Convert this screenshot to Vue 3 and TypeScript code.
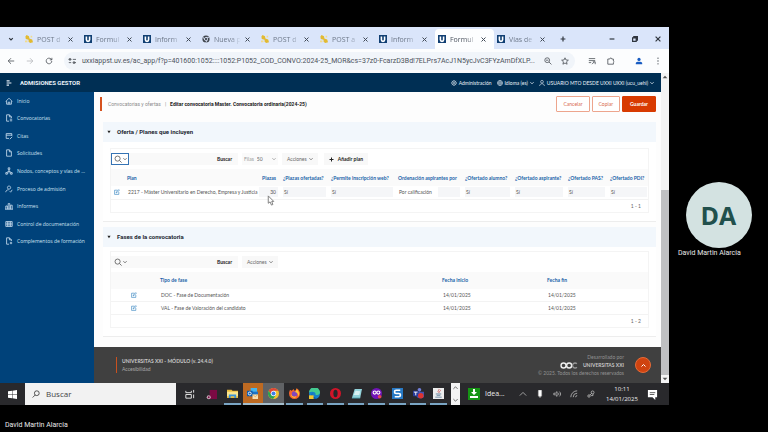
<script setup lang="ts">
import { ref } from 'vue'

interface Tab { icon: 'php' | 'u' | 'chrome'; label: string; active?: boolean }
const tabs: Tab[] = [
  { icon: 'php', label: 'POST d' },
  { icon: 'u', label: 'Formul' },
  { icon: 'u', label: 'Inform' },
  { icon: 'chrome', label: 'Nueva p' },
  { icon: 'php', label: 'POST d' },
  { icon: 'php', label: 'POST a' },
  { icon: 'u', label: 'Inform' },
  { icon: 'u', label: 'Formul', active: true },
  { icon: 'u', label: 'Vías de' },
]

const url = ref('uxxiappst.uv.es/ac_app/f?p=401600:1052::::1052:P1052_COD_CONVO:2024-25_MOR&cs=37z0-FcarzD3Bd!7ELPrs7AcJ1N5ycJvC3FYzAmDfXLP...')

const menu: { label: string; paths: string[] }[] = [
  { label: 'Inicio', paths: ['M1 5.5 5 1.5 9 5.5', 'M2 5v4h6V5', 'M4 9V6.5h2V9'] },
  { label: 'Convocatorias', paths: ['M5 9H2V1h3.5L8 3.5V5', 'M5.5 1v2.5H8', 'M6 6.5h3M6 8.5h3'] },
  { label: 'Citas', paths: ['M8.5 5V2h-7v6H5', 'M1.5 4h7', 'M6 9l3-3'] },
  { label: 'Solicitudes', paths: ['M2 1h3.5L8 3.5V9H2z', 'M5.5 1v2.5H8'] },
  { label: 'Nodos, conceptos y vías de ...', paths: ['M4 1h2v2H4z', 'M1 7h2v2H1zM7 7h2v2H7z', 'M5 3v2L2 7M5 5l3 2M5 5v3'] },
  { label: 'Proceso de admisión', paths: ['M5 1.2a2 2 0 1 0 .1 0', 'M1 9c0-2 1.500-3 3.500-3', 'M6 8l1 1 2-3'] },
  { label: 'Informes', paths: ['M1 9V5h2v4M4 9V2h2v7M7 9V4h2v5', 'M0 9h10'] },
  { label: 'Control de documentación', paths: ['M1 2h8v6H1z', 'M3 2v6M5 2v6M7 2v6', 'M1 5h8'] },
  { label: 'Complementos de formación', paths: ['M5 9H2V1h3.5L8 3.500V5', 'M5.5 1v2.500H8', 'M7.500 6v3M6 7.500h3'] },
]

const planFlags = ['Sí', 'Sí']
const offerFlags = ['Sí', 'Sí', 'Sí', 'Sí']
const phases = [
  { type: 'DOC - Fase de Documentación', from: '14/01/2025', to: '14/01/2025' },
  { type: 'VAL - Fase de Valoración del candidato', from: '14/01/2025', to: '14/01/2025' },
]
const rowsPerPage = ref('50')
const planSearch = ref('')
const phaseSearch = ref('')
const taskSearch = ref('')
</script>

<template>
  <div class="call">
    <div class="stage">
      <section class="desktop">
        <header class="tabstrip">
          <button class="plain tab-list" aria-label="Buscar pestañas"><svg class="i6" viewBox="0 0 10 10"><path d="M2 3.500 5 6.500 8 3.500" /></svg></button>
          <div v-for="(tab, i) in tabs" :key="i" class="tab" :class="{ active: tab.active }">
            <svg v-if="tab.icon === 'php'" class="fav" viewBox="0 0 10 10"><path class="f-yel" d="M2 0 5 1.500 5.500 4.500 9 5.500 10 9 6.500 10 4.500 8.500 4.500 6 1 5 .5 2z" /><path class="f-pale" d="M0 7h3v2H0zM7 1h2v2H7z" /></svg>
            <svg v-else-if="tab.icon === 'u'" class="fav" viewBox="0 0 10 10"><rect class="f-navy" width="10" height="10" /><path class="s-white" d="M3 2v4a2 2 0 0 0 4 0V2" /></svg>
            <svg v-else class="fav" viewBox="0 0 10 10"><circle class="f-dark" cx="5" cy="5" r="4.500" /><circle class="ring" cx="5" cy="5" r="2" /><path class="s-thin" d="M5 3h4M3.300 6 1.300 2.600M6.700 6 4.700 9.500" /></svg>
            <span class="tab-label">{{ tab.label }}</span>
            <button class="plain close" aria-label="Cerrar pestaña"><svg class="i5" viewBox="0 0 10 10"><path d="m1 1 8 8M9 1 1 9" /></svg></button>
          </div>
          <button class="plain new-tab" aria-label="Nueva pestaña"><svg class="i6" viewBox="0 0 10 10"><path d="M5 1v8M1 5h8" /></svg></button>
          <div class="win-buttons">
            <button class="plain" aria-label="Minimizar"><svg class="i6" viewBox="0 0 10 10"><path d="M1 5h8" /></svg></button>
            <button class="plain" aria-label="Restaurar"><svg class="i6" viewBox="0 0 10 10"><path d="M1 3h6v6H1zM3 3V1h6v6H7" /></svg></button>
            <button class="plain" aria-label="Cerrar"><svg class="i6" viewBox="0 0 10 10"><path d="m1 1 8 8M9 1 1 9" /></svg></button>
          </div>
        </header>

        <div class="toolbar">
          <button class="plain" aria-label="Atrás"><svg class="i8" viewBox="0 0 10 10"><path d="M9 5H1.500M5 1.500 1.500 5 5 8.500" /></svg></button>
          <button class="plain faded" aria-label="Adelante"><svg class="i8" viewBox="0 0 10 10"><path d="M1 5h7.500M5 1.500 8.500 5 5 8.500" /></svg></button>
          <button class="plain" aria-label="Recargar"><svg class="i8" viewBox="0 0 10 10"><path d="M8.500 5a3.500 3.500 0 1 1-1-2.500L8.500 3.500M8.600 1v2.600H6" /></svg></button>
          <div class="omnibox">
            <svg class="i8" viewBox="0 0 10 10"><path d="M1 3h3M6 3h4M1 7h3M6.500 7H10" /><circle cx="2.500" cy="3" r="1.200" /><circle cx="7.500" cy="7" r="1.200" /></svg>
            <input v-model="url" aria-label="Dirección" />
            <button class="plain" aria-label="Zoom"><svg class="i8" viewBox="0 0 10 10"><circle cx="4" cy="4" r="3" /><path d="m6.300 6.300 3 3M2.500 4h3" /></svg></button>
            <button class="plain" aria-label="Favorito"><svg class="i8" viewBox="0 0 10 10"><path d="m5 1 1.200 2.700 3 .3-2.300 2 .7 3L5 7.500 2.400 9l.7-3L.8 4l3-.3z" /></svg></button>
          </div>
          <div class="tools">
            <button class="plain" aria-label="Lista"><svg class="i8" viewBox="0 0 10 10"><path d="M1 2h8M1 4.500h8M1 7h3M5 9l3-3M6 6h3v3" /></svg></button>
            <button class="plain" aria-label="Extensiones"><svg class="i8" viewBox="0 0 10 10"><path d="M1 2.500h2.500a1.200 1.200 0 0 1 2.400 0H8V5a1.100 1.100 0 0 1 0 2v2H1z" /></svg></button>
            <button class="plain profile" aria-label="Perfil"><svg class="i8" viewBox="0 0 10 10"><circle class="f-blue" cx="5" cy="3" r="2" /><path class="f-blue" d="M1 9V7.500C1 5.500 9 5.500 9 7.500V9z" /></svg></button>
            <button class="plain" aria-label="Menú"><svg class="i8" viewBox="0 0 10 10"><circle class="f-dark" cx="5" cy="1.500" r=".8" /><circle class="f-dark" cx="5" cy="5" r=".8" /><circle class="f-dark" cx="5" cy="8.500" r=".8" /></svg></button>
          </div>
        </div>

        <div class="viewport">
          <div class="app">
            <header class="app-head">
              <button class="plain" aria-label="Menú principal"><svg class="i6" viewBox="0 0 10 10"><path d="M1 1.500h5M1 5h8M1 8.500h4" /></svg></button>
              <strong>ADMISIONES GESTOR</strong>
              <nav class="head-nav">
                <a href="#"><svg class="i6" viewBox="0 0 10 10"><circle cx="5" cy="5" r="3.500" /><circle cx="5" cy="5" r="1.300" /><path d="M5 0v1.500M5 8.500V10M0 5h1.500M8.500 5H10M1.500 1.500l1 1M7.500 7.500l1 1M8.500 1.500l-1 1M1.500 8.500l1-1" /></svg>Administración</a>
                <a href="#"><svg class="i6" viewBox="0 0 10 10"><circle cx="5" cy="5" r="4.200" /><path d="M1 5h8M5 1C2.500 3 2.500 7 5 9M5 1c2.500 2 2.500 6 0 8" /></svg>Idioma (es)<svg class="i4" viewBox="0 0 10 10"><path d="m1 3 4 4 4-4" /></svg></a>
                <a href="#"><svg class="i6" viewBox="0 0 10 10"><circle cx="5" cy="3" r="2.300" /><path d="M1 10c0-5 8-5 8 0" /></svg>USUARIO MTO DESDE UXXI UXXI (ucu_uehi)<svg class="i4" viewBox="0 0 10 10"><path d="m1 3 4 4 4-4" /></svg></a>
              </nav>
            </header>

            <aside class="sidebar">
              <nav>
                <a v-for="item in menu" :key="item.label" href="#">
                  <svg class="i8" viewBox="0 0 10 10"><path v-for="d in item.paths" :key="d" :d="d" /></svg>
                  <span>{{ item.label }}</span>
                </a>
              </nav>
            </aside>

            <main>
              <div class="title-row">
                <div class="crumbs"><a href="#">Convocatorias y ofertas</a><i>|</i><b>Editar convocatoria Master. Convocatoria ordinaria(2024-25)</b></div>
                <div class="actions">
                  <button class="btn">Cancelar</button>
                  <button class="btn">Copiar</button>
                  <button class="btn primary">Guardar</button>
                </div>
              </div>

              <section class="card">
                <h2><svg class="tri" viewBox="0 0 10 10"><path d="M1 2h8L5 8z" /></svg>Oferta / Planes que incluyen</h2>
                <div class="panel">
                  <div class="controls">
                    <div class="search">
                      <button class="col-pick focused" aria-label="Elegir columna"><svg class="i8" viewBox="0 0 10 10"><circle cx="4.500" cy="4.500" r="3.200" /><path d="m7 7 2.500 2.500" /></svg><svg class="i4" viewBox="0 0 10 10"><path d="m1 3 4 4 4-4" /></svg></button>
                      <input v-model="planSearch" aria-label="Buscar planes" />
                      <button class="plain go">Buscar</button>
                    </div>
                    <label class="rows">Filas
                      <select v-model="rowsPerPage"><option>50</option></select>
                      <svg class="i4" viewBox="0 0 10 10"><path d="m1 3 4 4 4-4" /></svg>
                    </label>
                    <button class="soft">Acciones<svg class="i4" viewBox="0 0 10 10"><path d="m1 3 4 4 4-4" /></svg></button>
                    <button class="soft add"><svg class="i5" viewBox="0 0 10 10"><path d="M5 1v8M1 5h8" /></svg>Añadir plan</button>
                  </div>
                  <table class="plans">
                    <colgroup><col class="w-edit" /><col /><col class="w-places" /><col class="w-seats" /><col class="w-web" /><col class="w-web" /><col class="w-offer" /><col class="w-asp" /><col class="w-pas" /><col class="w-pas" /></colgroup>
                    <thead><tr><th></th><th>Plan</th><th class="num">Plazas</th><th>¿Plazas ofertadas?</th><th>¿Permite inscripción web?</th><th>Ordenación aspirantes por</th><th>¿Ofertado alumno?</th><th>¿Ofertado aspirante?</th><th>¿Ofertado PAS?</th><th>¿Ofertado PDI?</th></tr></thead>
                    <tbody>
                      <tr>
                        <td><a href="#" aria-label="Editar plan"><svg class="edit" viewBox="0 0 10 10"><path d="M6 2H1v7h7V5M3.500 6.500 4 5l4-4 1 1-4 4z" /></svg></a></td>
                        <td><span class="val">2217 - Máster Universitario en Derecho, Empresa y Justicia</span></td>
                        <td class="num"><span class="val fill">30</span></td>
                        <td v-for="(v, i) in planFlags" :key="i"><span class="val fill">{{ v }}</span></td>
                        <td><span class="val part">Por calificación</span></td>
                        <td v-for="(v, i) in offerFlags" :key="i"><span class="val fill">{{ v }}</span></td>
                      </tr>
                    </tbody>
                  </table>
                  <div class="pager">1 - 1</div>
                  <svg class="cursor" viewBox="0 0 8 12"><path d="M1 1v8l2-1.500L4.500 11l1.500-.6L4.800 7H7z" /></svg>
                </div>
              </section>

              <section class="card">
                <h2><svg class="tri" viewBox="0 0 10 10"><path d="M1 2h8L5 8z" /></svg>Fases de la convocatoria</h2>
                <div class="panel">
                  <div class="controls">
                    <div class="search">
                      <button class="col-pick" aria-label="Elegir columna"><svg class="i8" viewBox="0 0 10 10"><circle cx="4.500" cy="4.500" r="3.200" /><path d="m7 7 2.500 2.500" /></svg><svg class="i4" viewBox="0 0 10 10"><path d="m1 3 4 4 4-4" /></svg></button>
                      <input v-model="phaseSearch" aria-label="Buscar fases" />
                      <button class="plain go">Buscar</button>
                    </div>
                    <button class="soft">Acciones<svg class="i4" viewBox="0 0 10 10"><path d="m1 3 4 4 4-4" /></svg></button>
                  </div>
                  <table class="phases">
                    <colgroup><col class="w-pick" /><col /><col class="w-date" /><col class="w-date" /></colgroup>
                    <thead><tr><th></th><th>Tipo de fase</th><th>Fecha inicio</th><th>Fecha fin</th></tr></thead>
                    <tbody>
                      <tr v-for="p in phases" :key="p.type">
                        <td><a href="#" aria-label="Editar fase"><svg class="edit" viewBox="0 0 10 10"><path d="M6 2H1v7h7V5M3.500 6.500 4 5l4-4 1 1-4 4z" /></svg></a></td>
                        <td><span class="val">{{ p.type }}</span></td>
                        <td><span class="val">{{ p.from }}</span></td>
                        <td><span class="val">{{ p.to }}</span></td>
                      </tr>
                    </tbody>
                  </table>
                  <div class="pager">1 - 2</div>
                </div>
              </section>
            </main>

            <footer class="app-foot">
              <div class="product"><b>UNIVERSITAS XXI - MÓDULO (v. 24.4.0)</b><a href="#">Accesibilidad</a></div>
              <div class="credit">
                <span>Desarrollado por</span>
                <span class="brand"><svg viewBox="0 0 27 10"><circle cx="5" cy="5" r="3.600" /><circle cx="13" cy="5" r="3.600" /><path class="dim" d="M24 2.500a3.600 3.600 0 1 0 0 5" /></svg><b>UNIVERSITAS XXI</b></span>
                <span>© 2025. Todos los derechos reservados</span>
              </div>
              <button class="to-top" aria-label="Volver arriba"><svg class="i5" viewBox="0 0 10 10"><path d="m1 7 4-4 4 4" /></svg></button>
            </footer>
          </div>
          <div class="scrollbar">
            <svg viewBox="0 0 10 10"><path d="M2 6.500 5 3.500l3 3z" /></svg>
            <span></span>
            <span class="thumb"></span>
            <svg viewBox="0 0 10 10"><path d="M2 3.500 5 6.500l3-3z" /></svg>
          </div>
        </div>

        <footer class="taskbar">
          <button class="plain start" aria-label="Inicio"><svg viewBox="0 0 10 10"><path d="M0 1.400 4.500.8v3.900H0zM5 .7 10 0v4.700H5zM0 5.200h4.500v4L0 8.600zM5 5.200h5V10L5 9.300z" /></svg></button>
          <label class="task-search">
            <svg class="i8" viewBox="0 0 10 10"><circle cx="6" cy="4" r="3" /><path d="M4 6.200.8 9.400" /></svg>
            <input v-model="taskSearch" placeholder="Buscar" />
          </label>
          <div class="pinned">
            <button class="plain" aria-label="Vista de tareas"><svg class="lines" viewBox="0 0 12 12"><path d="M2 2v2h6V2M2 6h6v4H2zM10.500 1v3M10.500 6v4" /></svg></button>
            <button class="plain" aria-label="Capturas"><svg viewBox="0 0 12 12"><path fill="#7c0a43" d="M4 1h8v10H4z" /><circle cx="3" cy="9" r="2.200" fill="#c6a9b7" /><circle cx="3" cy="9" r="1" fill="#7c0a43" /></svg></button>
          </div>
          <div class="running">
            <button class="plain" aria-label="Explorador"><svg viewBox="0 0 12 12"><path fill="#e9b93a" d="M0 2h5l1 1h6v8H0z" /><path fill="#fbe58d" d="M0 4h12v5H0z" /><path fill="#3b93d8" d="M2 7h8v4H8V9H4v2H2z" /></svg></button>
            <button class="plain outlook" aria-label="Outlook"><svg viewBox="0 0 12 12"><path fill="#46b5ee" d="M4 0h7v8H4z" /><path fill="#1e72c4" d="M4 4h8v5H4z" /><path fill="#0b5aad" d="M0 3h6v6H0z" /><circle cx="3" cy="6" r="1.600" fill="none" stroke="#fff" /><path fill="#f8dfb2" d="M6 7h6v5H6z" /><path fill="none" stroke="#d89b45" stroke-width=".7" d="m6 7 3 2.500L12 7" /></svg></button>
            <button class="plain current" aria-label="Chrome"><svg viewBox="0 0 12 12"><circle cx="6" cy="6" r="6" fill="#f1c232" /><path fill="#dd4639" d="M.8 3A6 6 0 0 1 11.200 3H6L3.600 7.400z" /><path fill="#29a252" d="M.8 3a6 6 0 0 0 4.700 9L8.500 7.500H3.600z" /><circle cx="6" cy="6" r="2.900" fill="#fff" /><circle cx="6" cy="6" r="2.200" fill="#3e7eea" /></svg></button>
            <button class="plain" aria-label="Firefox"><svg viewBox="0 0 12 12"><path fill="#f5632c" d="M1 2l2 1 2-2 1 2c3-1 2-2 2-3 3 2 4 4 4 6a6 6 0 0 1-12 0c0-2 1-3 1-4z" /><circle cx="6" cy="6.500" r="3" fill="#8147bd" /><path fill="#ffc536" d="M8 1c3 2 4 6 2 8 0-3-1-4-4-5 2 0 2-2 2-3zM2 6c1 4 4 4 6 3-1 3-6 2-6-3z" /></svg></button>
            <button class="plain" aria-label="Edge"><svg viewBox="0 0 12 12"><circle cx="6" cy="6" r="6" fill="#1680ca" /><path fill="#44ca91" d="M0 5a6 6 0 0 1 12 0c0 3-4 3-5 2 1-3-4-4-7-2z" /><path fill="#0a4b9b" d="M4 5c-2 3 1 6 5 6-5 3-8-3-5-6z" /><path fill="#f1c52f" d="M0 8h5v4H0z" /></svg></button>
            <button class="plain" aria-label="Opera"><svg viewBox="0 0 12 12"><circle cx="6" cy="6" r="6" fill="#d21429" /><ellipse cx="6" cy="6" rx="2.300" ry="4" fill="#27262a" /></svg></button>
            <button class="plain" aria-label="Bloc de notas"><svg viewBox="0 0 12 12"><path fill="#93d3db" d="M4 1h8l-2 10H1z" /><path fill="#d8f1f3" d="m5 3 5 .5-1 4H3z" /><path stroke="#4999a8" d="M1 11h9" /></svg></button>
            <button class="plain" aria-label="UXXI"><svg viewBox="0 0 12 12"><circle cx="6" cy="6" r="6" fill="#7114b7" /><circle cx="4" cy="5" r="1.700" fill="none" stroke="#fff" stroke-width="1.200" /><circle cx="8" cy="5" r="1.700" fill="none" stroke="#fff" stroke-width="1.200" /><circle cx="9.500" cy="9.500" r="2" fill="#e64755" /></svg></button>
            <button class="plain" aria-label="Snagit"><svg viewBox="0 0 12 12"><rect width="12" height="12" fill="#2779c5" /><path fill="none" stroke="#fff" stroke-width="1.800" d="M9 2.500H4.500a1.700 1.700 0 0 0 0 3.500h3a1.700 1.700 0 0 1 0 3.500H3" /></svg></button>
            <button class="plain" aria-label="Teams"><svg viewBox="0 0 12 12"><circle cx="7" cy="2" r="2" fill="#7380dc" /><path fill="#4450b1" d="M4 4h8v5c0 3-8 3-8 0z" /><path fill="#293b9a" d="M0 3h6v6H0z" /><path stroke="#fff" d="M1 4.500h4M3 4.500V8" /><circle cx="8.500" cy="8.500" r="3" fill="#dd3431" /></svg></button>
            <button class="plain" aria-label="Java"><svg viewBox="0 0 12 12"><rect width="12" height="12" fill="#edeeee" /><path fill="none" stroke="#cf6664" d="M6 1c2 1-2 2 0 4M8 2c1 1-2 2-1 3" /><path fill="none" stroke="#6885a0" d="M3 6.500h6M4 8h4M2.500 10h7" /></svg></button>
          </div>
          <div class="spin"><svg viewBox="0 0 10 10"><path d="m2 7 3-3 3 3" /></svg><svg viewBox="0 0 10 10"><path d="m2 3 3 3 3-3" /></svg></div>
          <button class="plain idea"><svg viewBox="0 0 12 12"><rect width="12" height="12" fill="#159514" /><path fill="#fff" d="M5 1h2v3h2L6 7 3 4h2zM2 8h8v2H2z" /></svg>Idea...</button>
          <div class="tray">
            <svg viewBox="0 0 10 10"><path d="m1 7 4-4 4 4" /></svg>
            <svg viewBox="0 0 10 10"><rect class="solid" x="3" y="0" width="4" height="8" rx="1" /><path d="M5 8v2" /></svg>
            <svg viewBox="0 0 10 10"><path d="M1 4h2l2-2v6L3 6H1zM6.500 3.500c1 1 1 2 0 3M8 2c2 2 2 4 0 6" /></svg>
            <svg viewBox="0 0 10 10"><path d="M1 9a8 8 0 0 1 8-8M4 9a5 5 0 0 1 5-5M7 9a2 2 0 0 1 2-2" /></svg>
            <svg viewBox="0 0 10 10"><path d="M3.500 6.500 6 4" /><circle cx="2.500" cy="7.500" r="1.500" /><circle cx="7" cy="3" r="1.800" /><path d="M5 7h2.500V5" /></svg>
          </div>
          <div class="clock"><span>10:11</span><span>14/01/2025</span></div>
          <button class="plain notes" aria-label="Notificaciones"><svg viewBox="0 0 12 12"><path fill="#fff" d="M1 1h10v8H9v3L6 9H1z" /><path stroke="#555" d="M3 4h6M3 6h5" /></svg></button>
        </footer>
      </section>

      <aside class="participant">
        <div class="avatar">DA</div>
        <span>David Martin Alarcia</span>
      </aside>
    </div>
    <div class="speaker">David Martin Alarcia</div>
  </div>
</template>

<style>
body { margin: 0; background: #000; }
</style>

<style scoped>
* { box-sizing: border-box; }
.call { min-height: 100vh; display: flex; flex-direction: column; padding-top: 27px; background: #000; color: #e8e8e8; font-family: "Open Sans", "Noto Sans", sans-serif; }
.stage { flex: 1; display: grid; grid-template-columns: minmax(0, 1fr) 99px; }
.speaker { height: 27px; padding: 15px 5px 0; font-family: Roboto, sans-serif; font-size: 7px; line-height: 10px; }
.desktop { display: flex; flex-direction: column; min-width: 0; }
a { color: inherit; text-decoration: none; }
button, input, select { font: inherit; color: inherit; margin: 0; padding: 0; border: 0; background: none; outline: 0; border-radius: 0; }
button { white-space: nowrap; }
svg { display: block; flex: none; fill: none; stroke: currentColor; stroke-width: 1; }
.plain { display: flex; align-items: center; justify-content: center; }
.i4 { width: 4px; height: 4px; stroke-width: 2; }
.i5 { width: 5px; height: 5px; stroke-width: 2; }
.i6 { width: 6px; height: 6px; stroke-width: 2; }
.i8 { width: 8px; height: 8px; stroke-width: 1; }

.tabstrip { height: 22px; display: flex; align-items: stretch; padding-top: 2px; background: #dae5fa; color: #30363f; font-size: 7px; }
.tab-list { width: 22px; }
.tab { width: 59px; display: flex; align-items: center; gap: 4px; padding: 0 8px 0 3px; color: #6d7889; border-radius: 4px 4px 0 0; }
.tab.active { background: #fdfeff; color: #4b525e; }
.tab-label { flex: 1; min-width: 0; overflow: hidden; white-space: nowrap; mask-image: linear-gradient(90deg, #000 60%, transparent); }
.close { color: #414a57; }
.fav { width: 8px; height: 8px; }
.f-yel { fill: #e2ba31; stroke: none; }
.f-pale { fill: #f2dc8c; stroke: none; }
.f-navy { fill: #103f73; stroke: none; }
.f-dark { fill: #40464e; stroke: none; }
.f-blue { fill: #185cc2; stroke: none; }
.s-white { stroke: #fff; stroke-width: 2; }
.s-thin { stroke: #dae5fa; }
.ring { fill: #40464e; stroke: #dae5fa; }
.new-tab { width: 20px; }
.win-buttons { margin-left: auto; display: grid; grid-template-columns: repeat(3, 23px); }

.toolbar { height: 24px; display: flex; align-items: center; gap: 11px; padding: 0 7px; background: #fcfdfe; color: #4a4f56; font-size: 7px; }
.faded { opacity: .4; }
.omnibox { flex: 1; min-width: 0; height: 18px; display: flex; align-items: center; gap: 9px; padding: 0 6px 0 4px; border-radius: 9px; background: #f1f5fa; }
.omnibox input { flex: 1; min-width: 0; height: 12px; font-family: Roboto, sans-serif; color: #4c525a; }
.omnibox > svg { margin-right: -3px; }
.tools { display: flex; align-items: center; gap: 11px; padding-left: 2px; }
.profile { padding-left: 9px; }

.viewport { flex: 1; display: grid; grid-template-columns: minmax(0, 1fr) 8px; }
.app { display: grid; grid-template: 19px minmax(0, 1fr) 36px / 94px minmax(0, 1fr); font-family: Lato, sans-serif; font-size: 5px; line-height: 8px; color: #333; background: #fdfdfd; }
.app-head { grid-column: 1 / -1; display: flex; align-items: center; gap: 8px; padding: 0 7px 0 6px; background: #002f54; color: #e9f1f8; font-size: 6px; }
.app-head strong { font-family: Roboto, sans-serif; }
.head-nav { margin-left: auto; display: flex; gap: 5px; font-size: 5px; }
.head-nav a { display: flex; align-items: center; gap: 2px; }
.head-nav .i6 { stroke-width: 1; }
.sidebar { grid-row: 2 / 4; background: #00427a; color: #cfe2f2; font-family: "Open Sans", sans-serif; }
.sidebar nav { height: 158px; display: grid; grid-auto-rows: 1fr; }
.sidebar a { display: flex; align-items: center; gap: 4px; padding-left: 5px; white-space: nowrap; }

main { padding: 0 5px 0 9px; }
.title-row { height: 24px; display: flex; justify-content: space-between; align-items: center; margin-left: -3px; }
.crumbs { display: flex; align-items: center; gap: 4px; height: 14px; padding-left: 6px; border-left: 2px solid #d6521e; font-family: Roboto, sans-serif; }
.crumbs a, .crumbs i { color: #8c8c8c; font-style: normal; }
.crumbs b { color: #222; }
.actions { display: flex; gap: 2px; }
.btn { height: 16px; padding: 0 6px; border: 1px solid #eda58d; border-radius: 1px; color: #d8674a; background: #fff; }
.btn.primary { padding: 0 7px; background: #d83b01; border-color: #d83b01; color: #fff; font-weight: 700; }

.card { margin-top: 6px; padding-bottom: 8px; background: #fff; border-bottom: 1px solid #ededed; }
.card + .card { margin-top: 5px; }
h2 { margin: 0; height: 20px; display: flex; align-items: center; gap: 6px; padding-left: 4px; background: #f2f7fc; color: #1d2733; font-family: Roboto, sans-serif; font-size: 6px; line-height: 10px; }
.tri { width: 4px; height: 4px; fill: #222; stroke: none; }
.panel { position: relative; margin: 6px 7px 0; border: 1px solid #f4f4f4; }
.card + .card .panel { margin-top: 4px; }
.controls { height: 20px; display: flex; align-items: center; gap: 4px; }
.search { width: 127px; height: 12px; display: flex; align-items: stretch; background: #f9f9f9; }
.search input { flex: 1; min-width: 0; }
.col-pick { width: 18px; display: flex; align-items: center; justify-content: center; gap: 1px; color: #555; }
.col-pick.focused { border: 1px solid #3573b4; background: #fff; }
.go { padding: 0 6px; font-weight: 700; color: #222; }
.rows { height: 12px; width: 36px; display: flex; align-items: center; gap: 3px; padding: 0 2px; color: #999; background: #fafafa; }
.rows select { width: 14px; appearance: none; color: #666; }
.soft { height: 12px; display: flex; align-items: center; gap: 2px; padding: 0 5px; background: #f8f8f8; color: #666; }
.add { margin-left: 2px; gap: 4px; font-weight: 700; color: #222; }

table { width: 100%; table-layout: fixed; border-collapse: collapse; }
th { height: 17px; padding: 0 0 0 4px; text-align: left; white-space: nowrap; background: #fafafa; color: #1862a8; font-weight: 700; }
td { height: 13px; padding: 0 1px 0 4px; white-space: nowrap; color: #555; border-bottom: 1px solid #f3f3f3; }
th.num { padding: 0 3px 0 0; text-align: right; }
td.num { text-align: right; }
td:first-child { padding: 0; }
td a { display: grid; place-items: center; }
.val { display: block; padding: 0 2px 0 1px; line-height: 10px; }
.fill { background: #f5f6f8; }
.part { background: linear-gradient(90deg, #fff 64%, #f5f6f8 64%); }
.edit { width: 6px; height: 6px; color: #2a7cbc; }
.w-edit { width: 12px; }
.w-places { width: 24px; }
.w-seats { width: 48px; }
.w-offer { width: 50px; }
.w-web { width: 67px; }
.w-asp { width: 53px; }
.w-pas { width: 42px; }
.w-pick { width: 45px; }
.w-date { width: 105px; }
.pager { height: 12px; padding: 2px 7px 0 0; text-align: right; color: #666; }
.cursor { position: absolute; left: 156px; top: 46px; width: 8px; height: 11px; fill: #fff; stroke: #777; }

.app-foot { display: flex; align-items: center; padding: 0 10px 0 22px; background: #404040; color: #aaa; }
.product { display: flex; flex-direction: column; padding-left: 5px; border-left: 1px solid #c9511f; }
.product b { color: #c8c8c8; }
.credit { margin: 0 11px 0 auto; display: flex; flex-direction: column; align-items: flex-end; color: #929292; }
.brand { display: flex; align-items: center; gap: 4px; color: #c4c4c4; }
.brand svg { width: 19px; height: 7px; stroke: #eee; stroke-width: 2; }
.brand .dim { stroke: #999; }
.to-top { width: 16px; height: 16px; display: grid; place-items: center; border: 1px solid #e66b37; border-radius: 50%; background: #cf4310; color: #fff; }

.scrollbar { display: grid; grid-template-rows: 10px 107fr 185fr 8px; background: #f4f4f4; }
.scrollbar svg { width: 8px; height: 8px; fill: #555; stroke: none; }
.thumb { background: #bfc0c2; }

.taskbar { height: 22px; display: flex; align-items: center; background: #29292c; color: #ececec; font-size: 7px; line-height: 10px; }
.taskbar .plain { height: 22px; }
.start { width: 25px; }
.start svg { width: 9px; height: 9px; fill: #fff; stroke: none; }
.task-search { flex: 1; max-width: 151px; height: 22px; display: flex; align-items: center; gap: 6px; padding-left: 7px; background: #f2f2f2; color: #333; font-size: 8px; }
.task-search input { min-width: 0; flex: 1; }
.task-search input::placeholder { color: #444; opacity: 1; }
.pinned { display: grid; grid-template-columns: 22px 22px; margin-left: 2px; }
.pinned svg, .running svg { width: 11px; height: 11px; stroke-width: 1; }
.pinned svg:not(.lines) { stroke: none; }
.running { width: 227px; display: grid; grid-template-columns: repeat(11, 1fr); }
.running svg { stroke: none; }
.running .plain { border-bottom: 2px solid #7aa5c4; background-clip: padding-box; margin: 0 2px; }
.running .outlook, .running .current { margin: 0; border-color: #a4bdcc; }
.running .outlook { background: #bd6a22; }
.running .current { background: #606265; }
.spin { width: 9px; height: 22px; margin-left: 2px; display: flex; flex-direction: column; justify-content: space-between; align-items: center; padding: 1px 0; background: #f4f4f4; color: #333; }
.spin svg { width: 7px; height: 7px; }
.idea { gap: 5px; margin-left: 8px; }
.idea svg { width: 12px; height: 12px; stroke: none; }
.tray { margin-left: auto; display: flex; gap: 9px; color: #bcbcbc; }
.tray svg { width: 8px; height: 8px; }
.tray .solid { fill: #fff; }
.clock { width: 42px; margin-left: 6px; display: flex; flex-direction: column; align-items: center; font-size: 6px; line-height: 10px; }
.notes { margin: 0 11px 0 4px; }
.notes svg { width: 11px; height: 11px; stroke: none; }

.participant { display: flex; flex-direction: column; align-items: center; justify-content: center; padding-top: 8px; font-family: Roboto, sans-serif; font-size: 7px; line-height: 10px; }
.participant span { align-self: flex-start; padding-left: 9px; white-space: nowrap; }
.avatar { width: 66px; height: 66px; display: grid; place-items: center; border-radius: 50%; background: #d3e2e1; color: #21504c; font-family: "Open Sans", sans-serif; font-size: 25px; font-weight: 700; }
</style>
